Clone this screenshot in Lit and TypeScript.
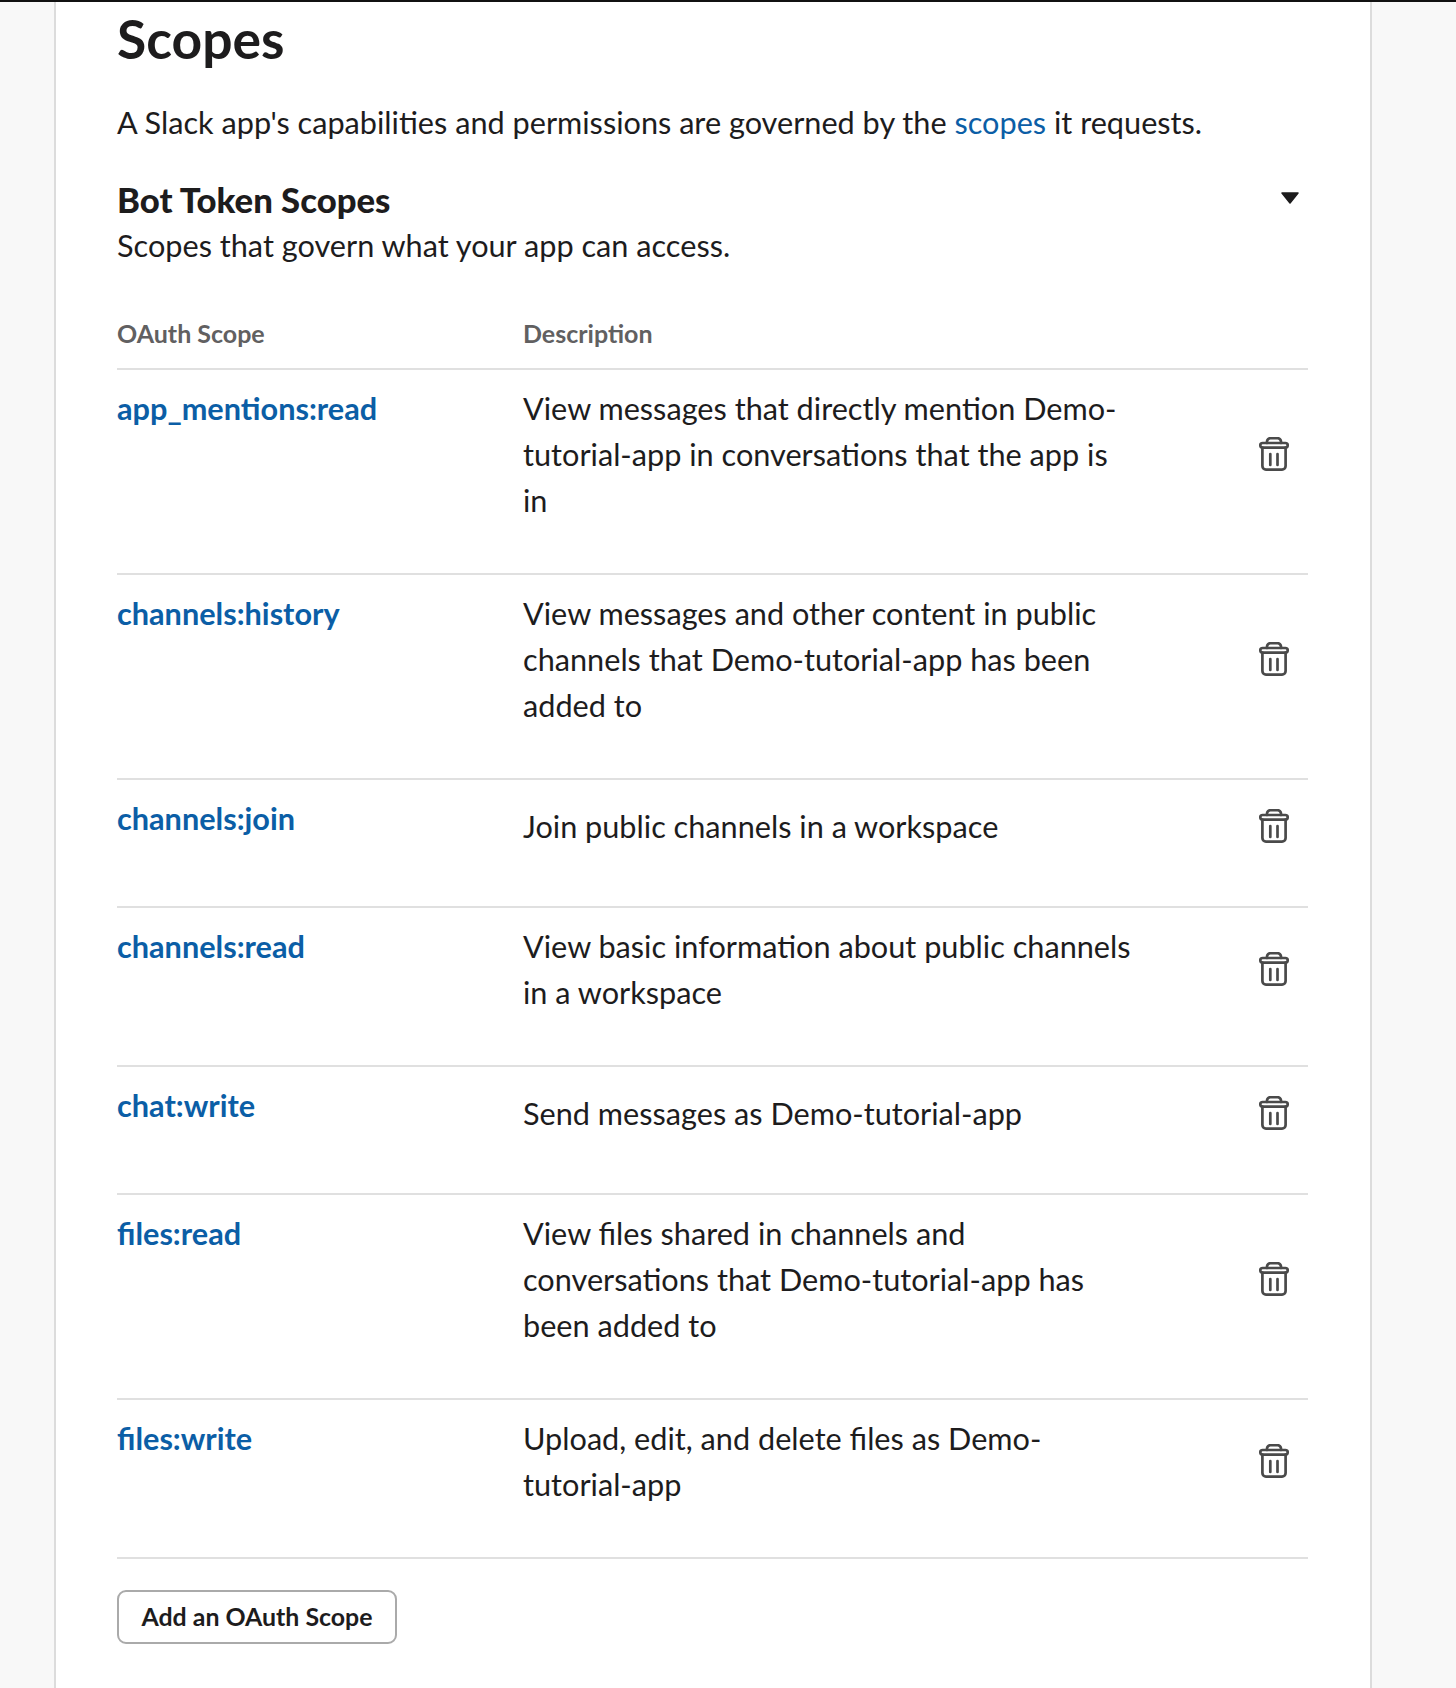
import { LitElement, html, css } from "lit";
import { customElement } from "lit/decorators.js";

const ROWS: [string, string][] = [
  ["app_mentions:read", "View messages that directly mention Demo-tutorial-app in conversations that the app is in"],
  ["channels:history", "View messages and other content in public channels that Demo-tutorial-app has been added to"],
  ["channels:join", "Join public channels in a workspace"],
  ["channels:read", "View basic information about public channels in a workspace"],
  ["chat:write", "Send messages as Demo-tutorial-app"],
  ["files:read", "View files shared in channels and conversations that Demo-tutorial-app has been added to"],
  ["files:write", "Upload, edit, and delete files as Demo-tutorial-app"],
];

const trash = html`<svg class="trash" viewBox="0 0 30 34" fill="none" stroke="#4a4a4a" stroke-width="2.7" stroke-linecap="round" stroke-linejoin="round">
  <path d="M8 6V4.6a3.4 3.4 0 0 1 3.4-3.4h7.2A3.4 3.4 0 0 1 22 4.6V6" />
  <rect x="1.3" y="6" width="27.4" height="4.6" rx="2.3" />
  <path d="M3.4 10.6V29a3.6 3.6 0 0 0 3.6 3.6h16A3.6 3.6 0 0 0 26.6 29V10.6" />
  <path d="M11.3 17v11M18.5 17v11" />
</svg>`;

@customElement("app-root")
export class AppRoot extends LitElement {
  static styles = css`
    :host {
      display: block;
      background: #f8f8f8;
      font-family: Lato, "Liberation Sans", sans-serif;
      color: #1d1c1d;
      font-size: 30.66px;
      border-top: 2px solid #111;
      box-sizing: border-box;
      overflow: hidden;
      height: 1688px;
    }
    .card {
      margin-left: 54px;
      width: 1318px;
      box-sizing: border-box;
      height: 1686px;
      background: #fff;
      border-left: 2px solid #dcdcdc;
      border-right: 2px solid #dcdcdc;
      padding: 0 62px 0 61px;
    }
    h1 {
      margin: 0;
      padding-top: 1px;
      font-size: 53.4px;
      line-height: 70px;
      font-weight: 700;
    }
    .intro {
      margin: 27px 0 0;
      line-height: 46px;
    }
    a {
      color: #0b5ea6;
      text-decoration: none;
    }
    .head {
      margin-top: 31px;
      position: relative;
    }
    h2 {
      margin: 0;
      font-size: 34.7px;
      line-height: 46px;
      font-weight: 900;
    }
    .sub {
      line-height: 46px;
    }
    .caret {
      position: absolute;
      right: 9px;
      top: 15px;
      width: 18px;
      height: 12px;
    }
    .cols,
    .row {
      display: grid;
      grid-template-columns: 406px 612px 1fr;
      border-bottom: 2px solid #e0e0e0;
    }
    .cols {
      margin-top: 45px;
      padding-bottom: 16px;
      font-size: 25px;
      line-height: 38px;
      font-weight: 700;
      color: #616061;
    }
    .row {
      padding: 16px 0 49px;
    }
    .name {
      font-weight: 700;
      line-height: 46px;
    }
    .desc {
      line-height: 46px;
      min-height: 61px;
      display: flex;
      align-items: center;
    }
    .act {
      display: flex;
      align-items: center;
      justify-content: flex-end;
      padding: 0 19px 2px 0;
    }
    .trash {
      width: 30px;
      height: 34px;
      display: block;
    }
    button {
      display: block;
      margin-top: 31px;
      width: 280px;
      height: 54px;
      box-sizing: border-box;
      background: #fff;
      border: 2px solid #aaaaaa;
      border-radius: 9px;
      font: 700 24.9px Lato, sans-serif;
      color: #1d1c1d;
      padding: 0 0 2px;
    }
  `;

  render() {
    return html`<main class="card">
      <h1>Scopes</h1>
      <p class="intro">A Slack app's capabilities and permissions are governed by the <a href="#">scopes</a> it requests.</p>
      <div class="head">
        <h2>Bot Token Scopes</h2>
        <div class="sub">Scopes that govern what your app can access.</div>
        <svg class="caret" viewBox="0 0 18 12"><path d="M1 1h16L9 11Z" fill="#1d1c1d" stroke="#1d1c1d" stroke-width="1.5" stroke-linejoin="round" /></svg>
      </div>
      <div class="cols"><span>OAuth Scope</span><span>Description</span><span></span></div>
      ${ROWS.map(
        ([n, d]) => html`<div class="row">
          <a class="name" href="#">${n}</a>
          <div class="desc"><span>${d}</span></div>
          <div class="act">${trash}</div>
        </div>`
      )}
      <button>Add an OAuth Scope</button>
    </main>`;
  }
}
